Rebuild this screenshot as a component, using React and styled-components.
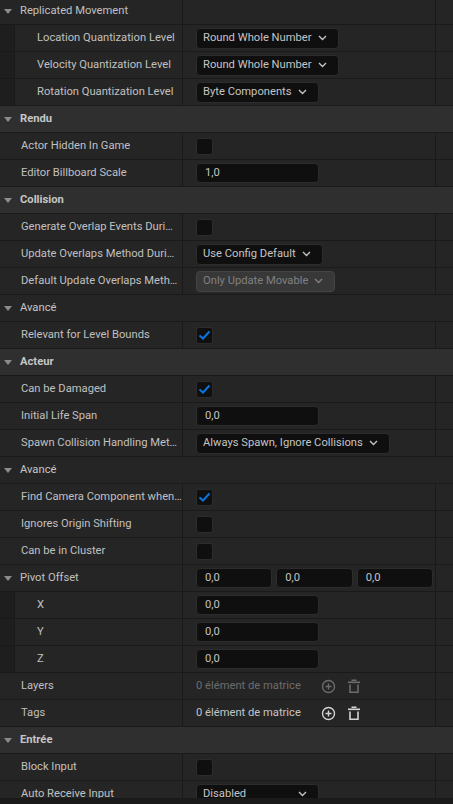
import React from "react";
import styled, { createGlobalStyle } from "styled-components";

const Global = createGlobalStyle`
  html, body { margin: 0; padding: 0; background: #1a1a1a; }
  body { font-family: Roboto, "Noto Sans", "Liberation Sans", sans-serif; font-size: 11.2px; }
  * { box-sizing: border-box; }
`;

const Panel = styled.div`
  width: 453px;
  height: 798px;
  overflow: hidden;
  background: #252525;
`;

const List = styled.div`
  margin-top: -2px;
  display: flex;
  flex-direction: column;
`;

const HeaderRow = styled.div`
  height: 27px;
  display: flex;
  align-items: center;
  padding-left: 4px;
  padding-bottom: 1px;
  gap: 8px;
  background: ${(p) => (p.$sub ? "#252525" : "#2f2f2f")};
  border-bottom: 1px solid #1a1a1a;
  color: #c6c6c6;
  font-weight: ${(p) => (p.$sub ? 400 : 700)};
`;

const Arrow = styled.span`
  width: 0;
  height: 0;
  margin-top: 1px;
  border-left: 4.5px solid transparent;
  border-right: 4.5px solid transparent;
  border-top: 5px solid #8c8c8c;
  flex: none;
`;

const Row = styled.div`
  height: 27px;
  display: flex;
  border-bottom: 1px solid #1a1a1a;
`;

const NameCell = styled.div`
  width: 183px;
  flex: none;
  display: flex;
  align-items: center;
  padding-bottom: 1px;
  border-right: 1px solid #1a1a1a;
  color: #c0c0c0;
  white-space: nowrap;
  overflow: hidden;
`;

const Indent = styled.div`
  width: 15px;
  align-self: stretch;
  margin-bottom: -1px;
  flex: none;
  background: #1e1e1e;
  border-right: 1px solid #191919;
`;

const NameText = styled.span`
  padding-left: ${(p) => (p.$indent ? "22px" : "21px")};
`;

const ExpandName = styled.div`
  display: flex;
  align-items: center;
  gap: 8px;
  padding-left: 4px;
`;

const ValueCell = styled.div`
  width: 253px;
  flex: none;
  display: flex;
  align-items: center;
  gap: 20px;
  padding-left: 13px;
  border-right: 1px solid #1a1a1a;
`;

const Gutter = styled.div`
  flex: 1;
`;

const Checkbox = styled.div`
  width: 17px;
  height: 17px;
  border-radius: 3px;
  background: #0f0f0f;
  border: 1px solid #2c2c2c;
  display: flex;
  align-items: center;
  justify-content: center;
`;

const Dropdown = styled.div`
  height: 21px;
  min-width: 123px;
  display: inline-flex;
  align-items: center;
  justify-content: space-between;
  gap: 6px;
  padding: 0 11px 1px 6px;
  border-radius: 4px;
  background: ${(p) => (p.$disabled ? "#383838" : "#0f0f0f")};
  border: 1px solid ${(p) => (p.$disabled ? "#444444" : "#2c2c2c")};
  color: ${(p) => (p.$disabled ? "#808080" : "#c4c4c4")};
  white-space: nowrap;
`;

const NumberInput = styled.div`
  height: 20px;
  width: ${(p) => (p.$small ? "auto" : "123px")};
  flex: ${(p) => (p.$small ? "1" : "none")};
  display: flex;
  align-items: center;
  padding: 0 0 1px 8px;
  border-radius: 4px;
  background: #0f0f0f;
  border: 1px solid #2c2c2c;
  color: #c4c4c4;
`;

const Vector = styled.div`
  width: 237px;
  display: flex;
  gap: 4px;
`;

const ArrayText = styled.span`
  color: ${(p) => (p.$dim ? "#6c6c6c" : "#c4c4c4")};
  white-space: nowrap;
  padding-bottom: 1px;
`;

const IconGroup = styled.div`
  display: flex;
  align-items: center;
  gap: 11px;
  color: ${(p) => (p.$dim ? "#6c6c6c" : "#d4d4d4")};
`;

const Chevron = () => (
  <svg width="9" height="6" viewBox="0 0 9 6" style={{ flex: "none" }}>
    <path d="M1 1 L4.5 4.5 L8 1" fill="none" stroke="currentColor" strokeWidth="1.4" />
  </svg>
);

const Check = () => (
  <svg width="15" height="15" viewBox="0 0 15 15">
    <path d="M2.5 7.5 L6 10.5 L12.5 3.5" fill="none" stroke="#0a74e0" strokeWidth="2" />
  </svg>
);

const PlusCircle = () => (
  <svg width="15" height="15" viewBox="0 0 15 15">
    <circle cx="7.5" cy="7.5" r="6" fill="none" stroke="currentColor" strokeWidth="1.4" />
    <path d="M7.5 4.5 V10.5 M4.5 7.5 H10.5" stroke="currentColor" strokeWidth="1.4" />
  </svg>
);

const Trash = () => (
  <svg width="14" height="15" viewBox="0 0 14 15">
    <rect x="4.5" y="0.5" width="5" height="1.5" fill="currentColor" />
    <rect x="1" y="2.5" width="12" height="1.6" fill="currentColor" />
    <path d="M3 5.5 V13.3 H11 V5.5" fill="none" stroke="currentColor" strokeWidth="1.6" />
  </svg>
);

const Prop = ({ name, indent, expand, children }) => (
  <Row>
    <NameCell>
      {indent && <Indent />}
      {expand ? (
        <ExpandName>
          <Arrow />
          <span>{name}</span>
        </ExpandName>
      ) : (
        <NameText $indent={indent}>{name}</NameText>
      )}
    </NameCell>
    <ValueCell>{children}</ValueCell>
    <Gutter />
  </Row>
);

const Header = ({ title, sub }) => (
  <HeaderRow $sub={sub}>
    <Arrow />
    <span>{title}</span>
  </HeaderRow>
);

const Drop = ({ children, disabled }) => (
  <Dropdown $disabled={disabled}>
    <span>{children}</span>
    <Chevron />
  </Dropdown>
);

const Box = ({ checked }) => <Checkbox>{checked && <Check />}</Checkbox>;

export default function App() {
  return (
    <>
      <Global />
      <Panel>
        <List>
          <Prop name="Replicated Movement" expand />
          <Prop name="Location Quantization Level" indent>
            <Drop>Round Whole Number</Drop>
          </Prop>
          <Prop name="Velocity Quantization Level" indent>
            <Drop>Round Whole Number</Drop>
          </Prop>
          <Prop name="Rotation Quantization Level" indent>
            <Drop>Byte Components</Drop>
          </Prop>
          <Header title="Rendu" />
          <Prop name="Actor Hidden In Game">
            <Box />
          </Prop>
          <Prop name="Editor Billboard Scale">
            <NumberInput>1,0</NumberInput>
          </Prop>
          <Header title="Collision" />
          <Prop name="Generate Overlap Events Duri…">
            <Box />
          </Prop>
          <Prop name="Update Overlaps Method Duri…">
            <Drop>Use Config Default</Drop>
          </Prop>
          <Prop name="Default Update Overlaps Meth…">
            <Drop disabled>Only Update Movable</Drop>
          </Prop>
          <Header title="Avancé" sub />
          <Prop name="Relevant for Level Bounds">
            <Box checked />
          </Prop>
          <Header title="Acteur" />
          <Prop name="Can be Damaged">
            <Box checked />
          </Prop>
          <Prop name="Initial Life Span">
            <NumberInput>0,0</NumberInput>
          </Prop>
          <Prop name="Spawn Collision Handling Met…">
            <Drop>Always Spawn, Ignore Collisions</Drop>
          </Prop>
          <Header title="Avancé" sub />
          <Prop name="Find Camera Component when…">
            <Box checked />
          </Prop>
          <Prop name="Ignores Origin Shifting">
            <Box />
          </Prop>
          <Prop name="Can be in Cluster">
            <Box />
          </Prop>
          <Prop name="Pivot Offset" expand>
            <Vector>
              <NumberInput $small>0,0</NumberInput>
              <NumberInput $small>0,0</NumberInput>
              <NumberInput $small>0,0</NumberInput>
            </Vector>
          </Prop>
          <Prop name="X" indent>
            <NumberInput>0,0</NumberInput>
          </Prop>
          <Prop name="Y" indent>
            <NumberInput>0,0</NumberInput>
          </Prop>
          <Prop name="Z" indent>
            <NumberInput>0,0</NumberInput>
          </Prop>
          <Prop name="Layers">
            <ArrayText $dim>0 élément de matrice</ArrayText>
            <IconGroup $dim>
              <PlusCircle />
              <Trash />
            </IconGroup>
          </Prop>
          <Prop name="Tags">
            <ArrayText>0 élément de matrice</ArrayText>
            <IconGroup>
              <PlusCircle />
              <Trash />
            </IconGroup>
          </Prop>
          <Header title="Entrée" />
          <Prop name="Block Input">
            <Box />
          </Prop>
          <Prop name="Auto Receive Input">
            <Drop>Disabled</Drop>
          </Prop>
        </List>
      </Panel>
    </>
  );
}
